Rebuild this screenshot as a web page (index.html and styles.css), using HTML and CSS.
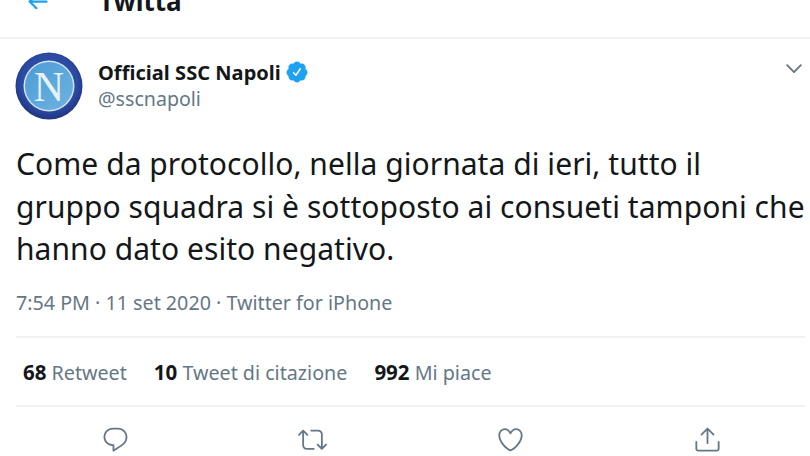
FILE: index.html
```html
<!DOCTYPE html>
<html lang="it">
<head>
<meta charset="utf-8">
<title>Official SSC Napoli su Twitter</title>
<link rel="stylesheet" href="styles.css">
</head>
<body>
<header class="topbar">
  <svg class="back" viewBox="0 0 24 24"><path d="M20 11H7.414l4.293-4.293c.39-.39.39-1.023 0-1.414s-1.023-.39-1.414 0l-6 6c-.39.39-.39 1.023 0 1.414l6 6c.195.195.45.293.707.293s.512-.098.707-.293c.39-.39.39-1.023 0-1.414L7.414 13H20c.553 0 1-.447 1-1s-.447-1-1-1z"/></svg>
  <h1 class="title">Twitta</h1>
</header>
<main class="tweet">
  <div class="author">
    <svg class="avatar" viewBox="0 0 68 68">
      <defs>
        <radialGradient id="ring" cx="50%" cy="45%" r="55%">
          <stop offset="75%" stop-color="#2c4ba3"/>
          <stop offset="100%" stop-color="#1f3580"/>
        </radialGradient>
        <linearGradient id="field" x1="0" y1="0" x2="1" y2="1">
          <stop offset="0%" stop-color="#4d9bd6"/>
          <stop offset="100%" stop-color="#6cb3e0"/>
        </linearGradient>
      </defs>
      <circle cx="34" cy="34" r="33.5" fill="url(#ring)"/>
      <circle cx="34" cy="34" r="25.5" fill="#d3e4f2"/>
      <circle cx="34" cy="34" r="24" fill="url(#field)"/>
      <text class="avatar-n" x="34" y="49" text-anchor="middle">N</text>
    </svg>
    <div class="names">
      <div class="name-row">
        <span class="name">Official SSC Napoli</span>
        <svg class="badge" viewBox="0 0 24 24"><path d="M22.5 12.5c0-1.58-.875-2.95-2.148-3.6.154-.435.238-.905.238-1.4 0-2.21-1.71-3.998-3.818-3.998-.47 0-.92.084-1.336.25C14.818 2.415 13.51 1.5 12 1.5s-2.816.917-3.437 2.25c-.415-.165-.866-.25-1.336-.25-2.11 0-3.818 1.79-3.818 4 0 .494.083.964.237 1.4-1.272.65-2.147 2.018-2.147 3.6 0 1.495.782 2.798 1.942 3.486-.02.17-.032.34-.032.514 0 2.21 1.708 4 3.818 4 .47 0 .92-.086 1.335-.25.62 1.334 1.926 2.25 3.437 2.25 1.512 0 2.818-.916 3.437-2.25.415.163.865.248 1.336.248 2.11 0 3.818-1.79 3.818-4 0-.174-.012-.344-.033-.513 1.158-.687 1.943-1.99 1.943-3.484zm-6.616-3.334l-4.334 6.5c-.145.217-.382.334-.625.334-.143 0-.288-.04-.416-.126l-.115-.094-2.415-2.415c-.293-.293-.293-.768 0-1.06s.768-.294 1.06 0l1.77 1.767 3.825-5.74c.23-.345.696-.436 1.04-.207.346.23.44.696.21 1.04z"/></svg>
      </div>
      <div class="handle">@sscnapoli</div>
    </div>
    <svg class="chevron" viewBox="0 0 24 24"><path d="M20.207 8.147c-.39-.39-1.023-.39-1.414 0L12 14.94 5.207 8.147c-.39-.39-1.023-.39-1.414 0-.39.39-.39 1.023 0 1.414l7.5 7.5c.195.195.45.293.707.293s.512-.098.707-.293l7.5-7.5c.39-.39.39-1.022 0-1.413z"/></svg>
  </div>
  <p class="text">Come da protocollo, nella giornata di ieri, tutto il<br>gruppo squadra si è sottoposto ai consueti tamponi che<br>hanno dato esito negativo.</p>
  <div class="meta">7:54 PM · 11 set 2020 · Twitter for iPhone</div>
  <div class="stats">
    <span class="stat"><b>68</b> Retweet</span>
    <span class="stat"><b>10</b> Tweet di citazione</span>
    <span class="stat"><b>992</b> Mi piace</span>
  </div>
  <div class="actions">
    <svg class="action" viewBox="0 0 24 24"><path d="M14.046 2.242l-4.148-.01h-.002c-4.374 0-7.8 3.427-7.8 7.802 0 4.098 3.186 7.206 7.465 7.37v3.828c0 .108.044.286.12.403.142.225.384.347.632.347.138 0 .277-.038.402-.118.264-.168 6.473-4.14 8.088-5.506 1.902-1.61 3.04-3.97 3.043-6.312v-.017c-.006-4.367-3.43-7.787-7.8-7.788zm3.787 12.972c-1.134.96-4.862 3.405-6.772 4.643V16.67c0-.414-.335-.75-.75-.75h-.396c-3.66 0-6.318-2.476-6.318-5.886 0-3.534 2.768-6.302 6.3-6.302l4.147.01h.002c3.532 0 6.3 2.766 6.302 6.296-.003 1.91-.942 3.844-2.514 5.176z"/></svg>
    <svg class="action" viewBox="0 0 24 24"><path d="M23.77 15.67c-.292-.293-.767-.293-1.06 0l-2.22 2.22V7.65c0-2.068-1.683-3.75-3.75-3.75h-5.85c-.414 0-.75.336-.75.75s.336.75.75.75h5.85c1.24 0 2.25 1.01 2.25 2.25v10.24l-2.22-2.22c-.293-.293-.768-.293-1.06 0s-.294.768 0 1.06l3.5 3.5c.145.147.337.22.53.22s.383-.072.53-.22l3.5-3.5c.294-.292.294-.767 0-1.06zm-10.66 3.28H7.26c-1.24 0-2.25-1.01-2.25-2.25V6.46l2.22 2.22c.148.147.34.22.532.22s.384-.073.53-.22c.293-.293.293-.768 0-1.06l-3.5-3.5c-.293-.294-.768-.294-1.06 0l-3.5 3.5c-.294.292-.294.767 0 1.06s.767.293 1.06 0l2.22-2.22V16.7c0 2.068 1.683 3.75 3.75 3.75h5.85c.414 0 .75-.336.75-.75s-.337-.75-.75-.75z"/></svg>
    <svg class="action" viewBox="0 0 24 24"><path d="M12 21.638h-.014C9.403 21.59 1.95 14.856 1.95 8.478c0-3.064 2.525-5.754 5.403-5.754 2.29 0 3.83 1.58 4.646 2.73.814-1.148 2.354-2.73 4.645-2.73 2.88 0 5.404 2.69 5.404 5.755 0 6.376-7.454 13.11-10.037 13.157H12zM7.354 4.225c-2.08 0-3.903 1.988-3.903 4.255 0 5.74 7.034 11.596 8.55 11.658 1.518-.062 8.55-5.917 8.55-11.658 0-2.267-1.823-4.255-3.903-4.255-2.528 0-3.94 2.936-3.952 2.965-.23.562-1.156.562-1.387 0-.014-.03-1.425-2.965-3.954-2.965z"/></svg>
    <svg class="action" viewBox="0 0 24 24"><path d="M17.53 7.47l-5-5c-.293-.293-.768-.293-1.06 0l-5 5c-.294.293-.294.768 0 1.06s.767.294 1.06 0l3.72-3.72V15c0 .414.336.75.75.75s.75-.336.75-.75V4.81l3.72 3.72c.146.147.338.22.53.22s.384-.072.53-.22c.293-.293.293-.767 0-1.06z"/><path d="M19.708 21.944H4.292C3.028 21.944 2 20.916 2 19.652V14c0-.414.336-.75.75-.75s.75.336.75.75v5.652c0 .437.355.792.792.792h15.416c.437 0 .792-.355.792-.792V14c0-.414.336-.75.75-.75s.75.336.75.75v5.652c0 1.264-1.028 2.292-2.292 2.292z"/></svg>
  </div>
</main>
</body>
</html>
```
FILE: styles.css
```css
* { box-sizing: border-box; }
html, body { margin: 0; padding: 0; }
body {
  width: 810px;
  height: 456px;
  overflow: hidden;
  background: #fff;
  color: #14171a;
  font-family: "Noto Sans", "Open Sans", sans-serif;
}
.topbar {
  height: 39px;
  border-bottom: 2px solid #eff1f3;
  display: flex;
  align-items: flex-end;
  padding: 0 0 21px 24px;
  overflow: hidden;
  gap: 48px;
}
.back { width: 27px; height: 27px; fill: #1da1f2; flex: none; margin-bottom: 1px; }
.title { margin: 0; font-size: 26px; line-height: 30px; font-weight: 700; color: #14171a; }
.tweet { padding: 0 5px 0 16px; }
.author { display: flex; align-items: flex-start; padding-top: 13px; }
.avatar { width: 68px; height: 68px; flex: none; margin-left: -1px; }
.avatar-n { font-family: "Liberation Serif", serif; font-size: 42px; fill: #e6f1f8; }
.names { margin-left: 15px; flex: 1; padding-top: 7px; }
.name-row { display: flex; align-items: center; gap: 4px; height: 26px; }
.name { font-size: 20px; font-weight: 700; color: #14171a; letter-spacing: 0.04px; }
.badge { width: 24px; height: 24px; fill: #1da1f2; }
.handle { font-size: 19.6px; line-height: 27px; color: #657786; }
.chevron { width: 22px; height: 22px; fill: #657786; margin: 5px 0 0; flex: none; }
.text { margin: 0; padding-top: 23px; font-size: 30px; line-height: 42.5px; color: #14171a; letter-spacing: 0.05px; white-space: nowrap; }
.meta { margin-top: 19px; font-size: 19.7px; line-height: 26px; color: #657786; }
.stats { margin-top: 20px; height: 71px; padding-top: 2px; border-top: 2px solid #eff1f3; border-bottom: 2px solid #eff1f3; display: flex; align-items: center; padding-left: 7px; gap: 27px; font-size: 19.7px; color: #657786; }
.stat b { color: #14171a; font-weight: 700; font-size: 20.5px; }
.actions { display: flex; justify-content: space-between; padding: 18px 83px 0 85px; }
.action { width: 29px; height: 29px; fill: #657786; }
```
